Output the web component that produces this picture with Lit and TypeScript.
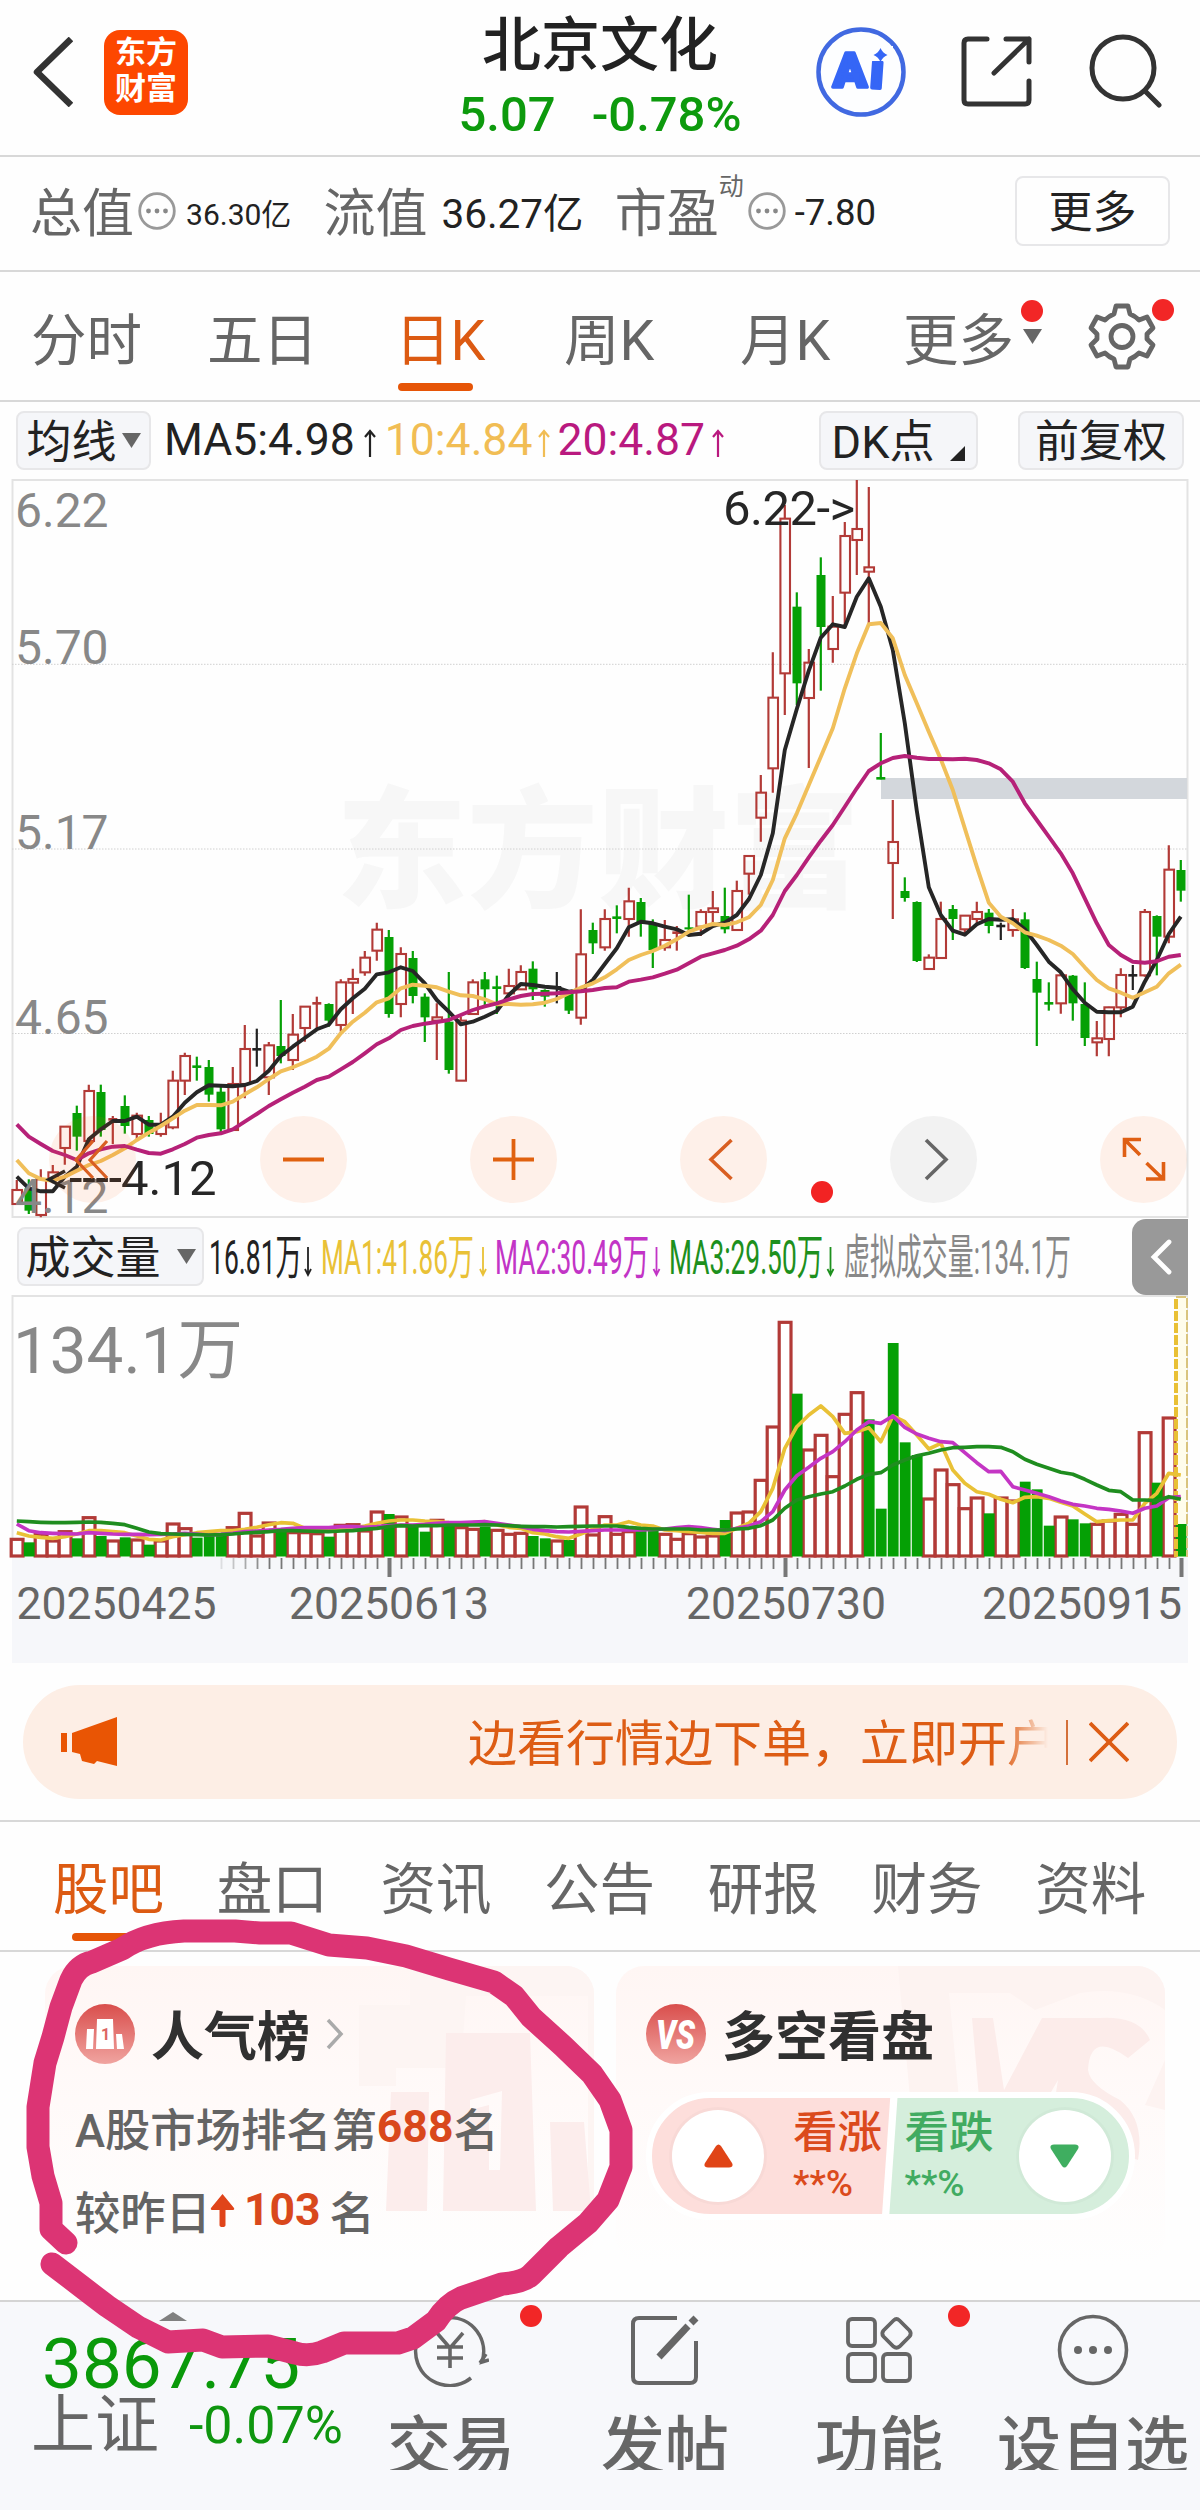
import { LitElement, html, svg, css } from "lit";
import { customElement } from "lit/decorators.js";

type Tone = "R" | "G" | "K";
type Candle = [Tone, number, number, number, number];

const STEP = 12;
const FIRST = 16.8;
const cx = (i: number) => FIRST + STEP * i;
const third = (base: number, values: number[]) => values.map((v) => base + v / 3);
const shift = (base: number, rows: Candle[]): Candle[] =>
  rows.map(([t, a, b, c, d]) => [t, base + a / 3, base + b / 3, base + c / 3, base + d / 3]);
const line = (ys: number[]) => ys.map((y, i) => `${cx(i).toFixed(1)},${y.toFixed(1)}`).join(" ");

/* tone, high, body top, body bottom, low */
const CANDLES: Candle[] = [
  ...shift(860, [
    ["R", 960, 990, 1032, 1032], ["G", 958, 985, 1052, 1062], ["R", 928, 958, 1065, 1072], ["R", 915, 937, 957, 970],
    ["R", 798, 800, 864, 914], ["G", 737, 759, 830, 872], ["R", 674, 693, 843, 860], ["G", 674, 696, 810, 830],
    ["R", 768, 778, 780, 852], ["G", 706, 738, 798, 821], ["R", 758, 767, 822, 840], ["G", 768, 780, 822, 830],
    ["R", 758, 795, 822, 830], ["R", 632, 662, 802, 808], ["R", 578, 588, 662, 705], ["G", 590, 620, 622, 662],
    ["G", 600, 621, 704, 725], ["G", 680, 695, 808, 818], ["R", 621, 672, 810, 810], ["R", 495, 567, 672, 715],
    ["K", 506, 568, 569, 620], ["R", 546, 556, 652, 705], ["G", 420, 558, 588, 610], ["R", 462, 524, 600, 630],
    ["R", 438, 440, 504, 545], ["R", 410, 430, 431, 505], ["G", 430, 432, 482, 500], ["R", 358, 367, 495, 515],
    ["R", 326, 357, 368, 462], ["R", 273, 293, 337, 347], ["R", 188, 209, 272, 302], ["G", 210, 231, 462, 473],
    ["R", 262, 282, 432, 472], ["G", 273, 294, 408, 430], ["G", 400, 410, 472, 546], ["R", 430, 472, 482, 600],
    ["G", 336, 485, 630, 641], ["R", 470, 482, 662, 662], ["R", 358, 367, 462, 462], ["G", 336, 358, 388, 440],
    ["G", 347, 383, 384, 462], ["R", 326, 378, 400, 410], ["R", 316, 336, 388, 390], ["G", 304, 326, 388, 420],
    ["G", 388, 390, 410, 440], ["K", 336, 382, 383, 430], ["G", 390, 398, 452, 462], ["R", 148, 283, 473, 494],
    ["G", 188, 210, 250, 282], ["R", 148, 177, 262, 272], ["G", 136, 173, 174, 220],
  ]),
  ...shift(800, [
    ["R", 263, 304, 357, 410], ["G", 294, 306, 368, 410], ["G", 358, 370, 450, 504], ["R", 360, 420, 442, 452],
    ["R", 378, 398, 399, 452], ["G", 284, 382, 388, 400], ["R", 328, 336, 380, 408], ["R", 273, 325, 336, 375],
    ["G", 263, 348, 388, 400], ["R", 242, 273, 390, 390], ["R", 168, 168, 221, 284],
  ]),
  ...shift(470, [
    ["R", 915, 968, 1043, 1115], ["R", 547, 683, 895, 968], ["R", 105, 146, 610, 735], ["G", 367, 410, 640, 705],
    ["R", 537, 578, 684, 894], ["G", 262, 315, 471, 662], ["R", 378, 470, 537, 578], ["R", 156, 198, 368, 465],
    ["R", 30, 177, 210, 315], ["R", 51, 292, 305, 465], ["G", 789, 925, 926, 928],
  ]),
  ...shift(800, [
    ["R", 0, 126, 189, 357], ["G", 232, 273, 294, 305], ["G", 304, 306, 483, 486], ["R", 463, 473, 507, 507],
    ["R", 305, 357, 474, 474], ["G", 315, 327, 357, 420], ["R", 345, 347, 388, 400], ["R", 305, 336, 357, 370],
    ["G", 327, 338, 378, 400], ["K", 368, 378, 379, 420], ["R", 327, 358, 390, 410], ["G", 337, 358, 504, 507],
    ["G", 485, 537, 578, 738], ["G", 547, 610, 611, 632], ["R", 520, 526, 610, 641], ["G", 525, 527, 610, 662],
    ["G", 547, 612, 714, 738], ["R", 663, 715, 727, 769], ["R", 620, 622, 717, 769], ["R", 505, 525, 622, 652],
    ["K", 495, 526, 527, 570], ["R", 327, 336, 526, 530], ["G", 346, 348, 410, 526], ["R", 136, 209, 410, 430],
    ["G", 180, 210, 272, 305],
  ]),
];

const MA5 = [
  ...third(860, [950, 985, 994, 994, 950, 920, 838, 808, 783, 783, 770, 794, 794, 770, 728, 697, 676, 677, 679, 675, 663, 632, 588, 560, 534, 508, 494, 448, 415, 386, 343, 337, 322, 333, 370, 420, 455, 493, 485, 470, 453, 405, 372, 375, 380, 383, 395, 390, 360, 312]),
  ...third(800, [445, 382, 365, 370, 380, 388, 405, 401, 378, 368, 345, 298, 225, 100]),
  ...third(470, [840, 717, 602, 503, 463, 471, 380, 325, 410, 540, 760, 1022]),
  ...third(800, [262, 345, 392, 404, 373, 357, 359, 358, 388, 435, 485, 517, 568, 608, 635, 637, 637, 620, 545, 480, 402, 350]),
];
const MA10 = [
  ...third(860, [900, 940, 957, 962, 950, 932, 915, 903, 885, 865, 840, 818, 798, 775, 752, 735, 735, 736, 725, 703, 682, 657, 634, 622, 607, 590, 566, 520, 485, 458, 427, 415, 385, 374, 377, 382, 395, 406, 408, 418, 433, 432, 434, 433, 428, 417, 400, 383, 370, 352]),
  ...third(800, [508, 480, 465, 453, 437, 418, 395, 382, 372, 375, 367, 352, 315, 240, 115]),
  ...third(470, [1030, 945, 860, 775, 655, 550, 463, 459, 505, 615, 700, 785, 868, 960, 1075]),
  ...third(800, [200, 308, 350, 370, 397, 407, 420, 437, 462, 502, 540, 565, 578, 593, 577, 560, 520, 494]),
];
const MA20 = [
  ...third(860, [793, 830, 852, 873, 885, 900, 880, 868, 860, 858, 869, 879, 881, 868, 852, 833, 825, 820, 808, 785, 762, 738, 718, 698, 680, 660, 650, 628, 606, 580, 553, 535, 510, 498, 491, 486, 480, 465, 450, 439, 430, 418, 408, 402, 401, 400, 397, 394, 390, 384]),
  ...third(800, [562, 545, 539, 532, 521, 509, 490, 470, 460, 450, 437, 418, 392, 345, 273, 225, 172, 122]),
  ...third(470, [1065, 1010, 955, 903, 880, 864, 858, 863, 867, 867, 868, 866, 870, 880, 898, 935, 1000]),
  ...third(800, [60, 110, 160, 220, 295, 370, 435, 465, 485, 488, 484, 470, 465]),
];

const VOLUMES: [Tone, number][] = (
  "R985 G997 R970 R990 R962 G985 R920 G978 R990 G982 R987 G1004 R990 R939 R953 G983 G975 G975 R950 R907 R975 R936 G958 R965 R965 R968 G980 R943 R941 R960 R903 G912 R918 G950 G965 R928 G945 R950 R955 G950 R958 R970 R967 G978 G985 R990 G990 R888 R972 R917 R970 " +
  "R962 G955 G960 R970 R985 R968 R978 R975 G930 R906 R903 R808 R648 R334 G551 R717 R673 R797 R610 R545 G628 G896 G399 G697 G735 R864 R777 R821 R893 R861 G910 R861 R870 G815 G838 G947 R918 G928 G940 R940 R930 R910 R940 R665 G818 R621 G942"
)
  .split(" ")
  .map((s) => [s[0] as Tone, 1210 + Number(s.slice(1)) / 3]);

const VMA1 = third(1210, [968, 978, 982, 985, 980, 972, 962, 962, 965, 968, 978, 988, 990, 980, 974, 968, 965, 962, 962, 958, 952, 944, 938, 940, 955, 955, 955, 955, 955, 948, 940, 933, 930, 930, 933, 935, 938, 940, 938, 935, 945, 952, 955, 968, 972, 980, 985, 972, 958, 945, 945, 935, 945, 948, 960, 962, 965, 967, 970, 970, 955, 940, 905, 835, 715, 650, 615, 588, 620, 670, 665, 653, 695, 618, 635, 675, 717, 700, 780, 820, 845, 853, 868, 878, 862, 860, 865, 877, 888, 912, 935, 932, 930, 930, 880, 850, 790, 795]);
const VMA2 = third(1210, [942, 962, 968, 970, 971, 972, 968, 970, 972, 973, 973, 974, 973, 972, 970, 972, 975, 973, 970, 965, 963, 960, 958, 955, 953, 953, 953, 950, 950, 952, 950, 947, 945, 945, 943, 940, 938, 938, 936, 935, 940, 945, 950, 958, 962, 965, 966, 964, 962, 960, 960, 960, 960, 958, 957, 953, 950, 953, 958, 962, 955, 948, 935, 905, 840, 797, 772, 745, 725, 695, 660, 635, 640, 618, 652, 672, 685, 695, 698, 728, 758, 785, 784, 830, 840, 850, 860, 873, 883, 888, 895, 898, 903, 910, 895, 888, 863, 860]);
const VMA3 = third(1210, [933, 935, 937, 938, 938, 937, 936, 937, 940, 944, 955, 966, 971, 972, 973, 974, 975, 974, 972, 969, 967, 965, 962, 962, 963, 964, 965, 963, 962, 958, 955, 950, 947, 948, 947, 947, 945, 945, 945, 944, 945, 947, 949, 950, 950, 951, 950, 949, 948, 948, 948, 952, 955, 957, 957, 957, 957, 960, 960, 960, 957, 955, 947, 930, 895, 870, 860, 852, 845, 828, 808, 793, 788, 765, 750, 737, 730, 720, 713, 712, 710, 710, 712, 725, 748, 763, 775, 787, 793, 808, 825, 841, 845, 870, 870, 872, 860, 868]);

const COLOR: Record<Tone, string> = { R: "#b23a37", G: "#05a005", K: "#222" };

@customElement("price-chart")
class PriceChart extends LitElement {
  static styles = css`
    :host { display: block; position: relative; height: 740px; }
    svg { display: block; }
    text { font-family: Roboto, "Noto Sans CJK SC", sans-serif; }
    .tools { position: absolute; left: 49px; top: 638px; display: flex; width: 1138px; }
    .tool { flex: none; width: 87px; height: 87px; border-radius: 50%; background: rgba(250, 95, 20, 0.09); margin-right: 123px; }
    .tool.gray { background: #f2f2f2; }
    .tool:nth-child(1) { margin-right: 124px; }
    .dot { position: absolute; left: 811px; top: 703px; width: 22px; height: 22px; border-radius: 50%; background: #f22323; }
  `;
  private candle([tone, hi, top, bottom, lo]: Candle, i: number) {
    const x = cx(i);
    const c = COLOR[tone];
    const flat = bottom - top < 1.5;
    if (flat)
      return svg`<path d="M${x} ${hi}V${lo}" stroke=${c} stroke-width="2.2" /><path d="M${x - 4.5} ${top}H${x + 4.5}" stroke=${c} stroke-width="2.6" />`;
    return tone === "R"
      ? svg`<path d="M${x} ${hi}V${top}M${x} ${bottom}V${lo}" stroke=${c} stroke-width="2.2" /><rect x=${x - 4.4} y=${top} width="9.6" height=${bottom - top} fill="none" stroke=${c} stroke-width="2.1" />`
      : svg`<path d="M${x} ${hi}V${lo}" stroke=${c} stroke-width="2.2" /><rect x=${x - 4.3} y=${top} width="9" height=${bottom - top} fill=${c} />`;
  }
  render() {
    return html`
      <svg width="1200" height="740" viewBox="0 478 1200 740" fill="none">
        <text x="336" y="897" font-size="131" font-weight="900" fill="#f7f7f7">东方财富</text>
        <rect x="12.5" y="480" width="1175" height="737" stroke="#e3e3e3" stroke-width="2" />
        <path d="M12 664.3H1187M12 849H1187M12 1033.5H1187" stroke="#d0d0d0" stroke-width="1" stroke-dasharray="1.5 1.5" />
        <rect x="881" y="778" width="306" height="21" fill="#d3d7dc" />
        ${CANDLES.map((c, i) => this.candle(c, i))}
        <g stroke-width="3.9" stroke-linejoin="round">
          <polyline points=${line(MA5)} stroke="#262626" />
          <polyline points=${line(MA10)} stroke="#f0bf5a" />
          <polyline points=${line(MA20)} stroke="#b62178" />
        </g>
        <g font-size="48" fill="#888">
          <text x="15" y="527">6.22</text><text x="15" y="664">5.70</text><text x="15" y="849">5.17</text>
          <text x="15" y="1034">4.65</text><text x="15" y="1213">4.12</text>
        </g>
        <g font-size="49" fill="#262626">
          <text x="723" y="525" textLength="132">6.22-&gt;</text>
          <text x="121" y="1195">4.12</text>
        </g>
        <path d="M65 1171L49 1179.500L65 1188" stroke="#262626" stroke-width="3.6" />
        <path d="M70 1180H121" stroke="#262626" stroke-width="3.800" stroke-dasharray="11.500 1.700" />
      </svg>
      <div class="tools">
        <svg class="tool" viewBox="0 0 87 87" fill="none" stroke="#d95f22" stroke-width="3.2"><path d="M44 25L27 44L44 62M58 25L41 44L58 62" /></svg>
        <svg class="tool" viewBox="0 0 87 87" fill="none" stroke="#e0610f" stroke-width="3.8"><path d="M23 43.5H64" /></svg>
        <svg class="tool" viewBox="0 0 87 87" fill="none" stroke="#e0610f" stroke-width="3.8"><path d="M23 43.5H64M43.5 23V64" /></svg>
        <svg class="tool" viewBox="0 0 87 87" fill="none" stroke="#d95f22" stroke-width="3.6"><path d="M51.5 24L31 43.5L51.5 63" /></svg>
        <svg class="tool gray" viewBox="0 0 87 87" fill="none" stroke="#666" stroke-width="3.6"><path d="M36 24L56 43.5L36 63" /></svg>
        <svg class="tool" viewBox="0 0 87 87" fill="none" stroke="#df5f14" stroke-width="3.600"><path d="M41 23.500H24.500V41M24.500 23.500L40 39M46.500 47L63 63M63.500 46V63H46" /></svg>
      </div>
      <span class="dot"></span>
    `;
  }
}

@customElement("volume-chart")
class VolumeChart extends LitElement {
  static styles = css`
    :host { display: block; height: 368px; }
    svg { display: block; }
    text { font-family: Roboto, "Noto Sans CJK SC", sans-serif; }
  `;
  render() {
    const ticks = VOLUMES.map((_, i) => i).filter((i) => i >= 17);
    return html`
      <svg width="1200" height="368" viewBox="0 1295 1200 368" fill="none">
        <path d="M12.500 1557V1296H1187V1557" stroke="#e3e3e3" stroke-width="2" />
        <rect x="12" y="1557" width="1176" height="106" fill="#f6f7fa" />
        <rect x="1176" y="1297" width="11" height="260" fill="#fffdec" />
        ${VOLUMES.map(([t, top], i) => t === "R"
          ? svg`<rect x=${cx(i) - 5.6} y=${top + 1} width="11.8" height=${1555 - top} fill="#fff" stroke="#b23a37" stroke-width="3.2" />`
          : "")}
        ${VOLUMES.map(([t, top], i) => t === "G"
          ? svg`<rect x=${cx(i) - 5} y=${top} width="10.8" height=${1556.5 - top} fill="#05a005" />`
          : "")}
        <path d="M1176 1299V1557" stroke="#e9c034" stroke-width="4" stroke-dasharray="10 2" />
        <path d="M1176 1297H1187V1557" stroke="#d9c47e" stroke-width="2" stroke-dasharray="10 2" />
        <g stroke-width="3.7" stroke-linejoin="round">
          <polyline points=${line(VMA1)} stroke="#e9c136" />
          <polyline points=${line(VMA2)} stroke="#c435c4" />
          <polyline points=${line(VMA3)} stroke="#1f8d1f" />
        </g>
        ${ticks.map((i) => {
          const major = i === 31 || i === 64 || i === 97;
          return svg`<path d="M${cx(i) + 0.7} 1558V${major ? 1577 : 1569}" stroke="#777" stroke-width=${major ? 4 : 1.8} opacity=${Math.min(1, (i - 16) / 5)} />`;
        })}
        <text x="13" y="1373" font-size="65.500" fill="#888">134.1万</text>
        <g font-size="44.500" fill="#666">
          <text x="16.500" y="1619">20250425</text><text x="289" y="1619">20250613</text>
          <text x="686" y="1619">20250730</text><text x="982" y="1619">20250915</text>
        </g>
      </svg>
    `;
  }
}

@customElement("app-root")
class AppRoot extends LitElement {
  static styles = css`
    :host { display: block; position: relative; width: 1200px; height: 2510px; overflow: hidden; background: #fefefe; color: #222;
      font-family: Roboto, "Noto Sans CJK SC", sans-serif; white-space: nowrap; }
    * { box-sizing: border-box; }
    svg { display: block; flex: none; }
    svg text { font-family: Roboto, "Noto Sans CJK SC", sans-serif; }
    .row { display: flex; align-items: center; }
    .row > * { flex: none; }
    header { display: grid; grid-template-columns: 1fr 300px 1fr; height: 157px; border-bottom: 2px solid #d8d8d8; }
    .left { display: flex; align-items: center; padding: 0 0 11px 32px; gap: 31px; }
    .logo { width: 84px; height: 85px; border-radius: 16px; background: #fd4700; color: #fff; font-weight: 700; font-size: 31px; line-height: 36px; text-align: center; padding-top: 5px; }
    .mid { display: flex; flex-direction: column; align-items: center; padding-top: 10px; }
    .name { font-size: 59px; font-weight: 500; line-height: 72px; }
    .quote { display: flex; gap: 36px; font-size: 49px; font-weight: 500; line-height: 66px; color: #0d9a0d; }
    .right { display: flex; align-items: center; padding: 0 0 12px 65px; gap: 53px; }
    .facts { height: 115px; padding: 0 0 8px 30px; border-bottom: 2px solid #d8d8d8; color: #666; font-size: 52px; }
    .facts b { font-weight: 400; color: #222; }
    .facts svg { margin-left: 4px; margin-top: 2px; }
    .v1 { font-size: 30px; margin: 4px 32px 0 10px; }
    .v2 { font-size: 40.500px; margin: 2px 31px 0 14px; }
    .v3 { font-size: 36.500px; margin: 5px 0 0 9px; }
    .dyn { font-size: 25px; align-self: flex-start; margin-top: 9px; }
    .box { border: 2px solid #e7e7e9; border-radius: 8px; color: #222; display: flex; align-items: center; justify-content: center; padding-bottom: 4px; }
    .box svg { margin-top: 4px; }
    .more { width: 155px; height: 70px; font-size: 44px; margin: 0 30px -3px auto; }
    .periods { height: 130px; border-bottom: 2px solid #d8d8d8; color: #666; font-size: 55.500px; padding-left: 31px; position: relative; }
    .periods > span { height: 128px; display: flex; align-items: center; padding-bottom: 1px; }
    .on { color: #dc5a12; position: relative; }
    .on::after { content: ""; position: absolute; left: 50%; margin-left: -37px; width: 75px; height: 8px; border-radius: 4px; background: #e65507; }
    .periods .on::after { top: 111px; left: 3px; margin-left: 0; }
    .badge { position: absolute; width: 22px; height: 22px; border-radius: 50%; background: #f22626; }
    .mas { height: 76px; padding: 0 16px; font-size: 44.500px; }
    .mas .box, .vols .box { background: #f5f6f9; height: 59px; font-size: 45px; }
    .vols { height: 77px; padding-left: 17px; position: relative; }
    .vols text { font-size: 48px; }
    .fold { width: 56px; height: 76px; border-radius: 14px 0 0 14px; background: #999; margin-left: 60px; display: flex; align-items: center; padding-left: 18px; }
    .banner { margin: 22px 23px 21px; height: 114px; border-radius: 57px; background: #fdeee5; color: #dd5c14; padding-left: 37px; }
    .slogan { margin-left: 350px; width: 580px; overflow: hidden; font-size: 49px; padding-bottom: 5px; -webkit-mask-image: linear-gradient(90deg, #000 92%, transparent 100%); }
    .slash { width: 2px; height: 45px; background: #d4703a; margin: 0 21px 0 18px; }
    .topics { height: 132px; border-top: 2px solid #d8d8d8; border-bottom: 2px solid #d8d8d8; color: #666; font-size: 55.500px; padding-left: 53px; gap: 52.700px; }
    .topics > span { height: 128px; display: flex; align-items: center; padding-bottom: 2px; }
    .topics .on::after { top: 111px; }
    .cards { display: flex; gap: 22px; padding: 14px 0 0 45px; height: 348px; }
    .card { width: 549px; height: 299px; border-radius: 28px; background: linear-gradient(#fff6f4, #fffaf9 45%, #fefefe); padding: 38px 0 0 30px; position: relative; overflow: hidden; }
    .deco { position: absolute; left: 0; top: 0; }
    .card > :not(.deco) { position: relative; }
    .head { height: 60px; font-size: 53px; font-weight: 700; color: #303030; gap: 16px; }
    .head span { padding-bottom: 2px; }
    .text { color: #646464; font-weight: 500; font-size: 45.300px; height: 84px; }
    .head + .text { height: 82px; margin-top: 22px; }
    .text b { color: #d9481c; font-size: 44.500px; font-weight: 700; }
    .duel { display: grid; grid-template-columns: 1fr 1fr; width: 489px; height: 128px; border-radius: 64px; border: 6px solid #fff; margin: 28px 0 0 0; font-weight: 500; overflow: hidden; background: linear-gradient(94deg, #fddedb 49%, #fff 49.200%, #fff 50.500%, #d5eedc 50.700%); }
    .side { display: flex; align-items: center; color: #db4a1c; }
    .down { color: #41ab61; padding-left: 14px; }
    .disc { width: 92px; height: 92px; border-radius: 50%; background: #fff; box-shadow: 0 0 0 3px rgba(0, 0, 0, 0.02); display: flex; align-items: center; justify-content: center; margin: 0 29px 0 20px; flex: none; }
    .down .disc { margin: 0 0 0 25px; }
    .say { font-size: 44.500px; line-height: 56px; }
    .say small { display: block; font-size: 37px; line-height: 46px; }
    footer { display: flex; height: 210px; background: #f7f8fb; border-top: 2px solid #d4d4d4; color: #666; }
    .index { width: 344px; padding: 10px 0 0 33px; }
    .peak { width: 0; height: 0; margin-left: 126px; border: 14px solid transparent; border-top: 0; border-bottom: 9px solid #808080; }
    .points { font-size: 71px; line-height: 78px; color: #0a990a; padding-left: 9px; margin-top: 4px; }
    .market { display: flex; align-items: center; font-size: 64px; line-height: 66px; margin: -10px 0 0 -2px; }
    .market b { font-weight: 400; font-size: 52px; color: #0f960f; margin-left: 30px; }
    .actions { display: grid; grid-template-columns: repeat(4, 214px); }
    .action { position: relative; height: 168px; overflow: hidden; padding-top: 11px; font-size: 64px; line-height: 76px; font-weight: 500; display: flex; flex-direction: column; align-items: center; }
    .action svg { width: 76px; height: 74px; margin-bottom: 23px; }
    .action .badge { left: 176px; top: 3px; }
    .ink { position: absolute; left: 0; top: 0; pointer-events: none; }
  `;

  private info() {
    return html`<svg width="38" height="38" viewBox="0 0 38 38"><circle cx="19" cy="19" r="17.300" fill="none" stroke="#999" stroke-width="2.800" /><g fill="#888"><circle cx="10.500" cy="19" r="2.400" /><circle cx="19" cy="19" r="2.400" /><circle cx="27.500" cy="19" r="2.400" /></g></svg>`;
  }
  private up(color: string, margin: string) {
    return html`<svg style="margin:${margin}" width="14" height="46" viewBox="0 0 14 46" fill="none" stroke=${color} stroke-width="2.200"><path d="M7 40V14M2 20L7 14L12 20" /></svg>`;
  }
  private caret() {
    return html`<svg width="19" height="15" viewBox="0 0 19 15"><path d="M0 0H19L9.500 15Z" fill="#666" /></svg>`;
  }

  render() {
    return html`
      <header>
        <div class="left">
          <svg width="41" height="70" viewBox="0 0 41 70" fill="none" stroke="#333" stroke-width="6.500" stroke-linejoin="round"><path d="M39 2L5 35L39 68" /></svg>
          <div class="logo">东方<br />财富</div>
        </div>
        <div class="mid">
          <div class="name">北京文化</div>
          <div class="quote"><span>5.07</span><span>-0.78%</span></div>
        </div>
        <div class="right">
          <svg width="92" height="92" viewBox="0 0 92 92"><circle cx="46" cy="46" r="42.500" fill="#fdfeff" stroke="#4169e1" stroke-width="4.500" />
            <g fill="#3566f6" stroke="#3566f6" stroke-width="3.500" stroke-linejoin="round" font-size="49" font-weight="900"><text x="18" y="61" textLength="34" lengthAdjust="spacingAndGlyphs">A</text><text x="55" y="62" transform="rotate(4 62 50)">i</text></g>
            <path d="M54 20H78V35H54Z" fill="#fdfeff" />
            <path d="M65.500 22Q67.500 27 72.500 29Q67.500 31 65.500 36Q63.500 31 58.500 29Q63.500 27 65.500 22Z" fill="#3566f6" /></svg>
          <svg width="73" height="73" viewBox="0 0 73 73" fill="none" stroke="#333" stroke-width="5" stroke-linecap="round" stroke-linejoin="round"><path d="M27 4H8Q4 4 4 8V65Q4 69 8 69H65Q69 69 69 65V46M46 4H69V27M69 4L34 38" /></svg>
          <svg width="76" height="76" viewBox="0 0 76 76" fill="none" stroke="#333" stroke-width="5" stroke-linecap="round"><circle cx="37" cy="34" r="31" /><path d="M59 57L73 71" /></svg>
        </div>
      </header>

      <section class="facts row">
        <span>总值</span>${this.info()}<b class="v1">36.30亿</b>
        <span>流值</span><b class="v2">36.27亿</b>
        <span>市盈</span><span class="dyn">动</span>${this.info()}<b class="v3">-7.80</b>
        <div class="box more">更多</div>
      </section>

      <nav class="periods row">
        <span style="width:175px">分时</span><span style="width:189px;padding-left:1px">五日</span><span class="on" style="width:169px">日K</span>
        <span style="width:176px">周K</span><span style="width:163px">月K</span><span>更多</span>
        <svg style="margin:0 44px 0 9px" width="19" height="15" viewBox="0 0 19 15"><path d="M0 0H19L9.500 15Z" fill="#666" /></svg>
        <svg width="72" height="72" viewBox="0 0 72 72" fill="none" stroke="#666" stroke-width="4.800" stroke-linejoin="round">
          <path d="M30 6H42L44 14Q49 16 53 20L61 17L67 28L61 34V39L67 45L61 56L53 53Q49 57 44 59L42 67H30L28 59Q23 57 19 53L11 56L5 45L11 39V34L5 28L11 17L19 20Q23 16 28 14Z" /><circle cx="36" cy="36.500" r="11" /></svg>
        <i class="badge" style="left:1021px;top:28px"></i><i class="badge" style="left:1152px;top:27px"></i>
      </nav>

      <section class="mas row">
        <div class="box" style="width:135px;gap:5px">均线${this.caret()}</div>
        <span style="margin-left:13px">MA5:4.98</span>${this.up("#222", "0 8px 0 8px")}
        <span style="color:#f1bd54">10:4.84</span>${this.up("#f1bd54", "0 6px 0 5px")}
        <span style="color:#b9197f">20:4.87</span>${this.up("#b9197f", "0 0 0 6px")}
        <div class="box" style="width:159px;margin:0 40px 0 auto;gap:16px">DK点<svg width="15" height="15" viewBox="0 0 15 15" style="margin-top:30px"><path d="M15 0V15H0Z" fill="#222" /></svg></div>
        <div class="box" style="width:166px;font-size:44px">前复权</div>
      </section>

      <price-chart></price-chart>

      <section class="vols row">
        <div class="box" style="width:187px;gap:16px">成交量${this.caret()}</div>
        <svg width="868" height="76" viewBox="204 1218 868 76">
          <text x="209" y="1273" textLength="93" lengthAdjust="spacingAndGlyphs" fill="#222">16.81万</text>
          <text x="321" y="1273" textLength="153" lengthAdjust="spacingAndGlyphs" fill="#e9c136">MA1:41.86万</text>
          <text x="495" y="1273" textLength="154" lengthAdjust="spacingAndGlyphs" fill="#c234c6">MA2:30.49万</text>
          <text x="669" y="1273" textLength="154" lengthAdjust="spacingAndGlyphs" fill="#1d901d">MA3:29.50万</text>
          <text x="844" y="1273" textLength="227" lengthAdjust="spacingAndGlyphs" fill="#888">虚拟成交量:134.1万</text>
          <g fill="none" stroke-width="1.800"><path d="M308 1246V1274M305 1268L308 1274L311 1268" stroke="#222" /><path d="M483 1246V1274M480 1268L483 1274L486 1268" stroke="#e9c136" /><path d="M656.500 1246V1274M653.500 1268L656.500 1274L659.500 1268" stroke="#c234c6" /><path d="M830.500 1246V1274M827.500 1268L830.500 1274L833.500 1268" stroke="#1d901d" /></g>
        </svg>
        <div class="fold"><svg width="22" height="38" viewBox="0 0 22 38" fill="none" stroke="#fff" stroke-width="4.800" stroke-linecap="round"><path d="M19 4L4 19L19 34" /></svg></div>
      </section>

      <volume-chart></volume-chart>

      <section class="banner row">
        <svg width="58" height="52" viewBox="0 0 58 52" fill="#e95504"><path d="M1 17H7V36H1ZM12 17L57 1V50L37 45L34 48L22 45L20 38L12 36Z" /></svg>
        <div class="slogan">边看行情边下单，立即开户</div>
        <i class="slash"></i>
        <svg width="40" height="42" viewBox="0 0 40 42" fill="none" stroke="#dd5c14" stroke-width="3.800"><path d="M1 2L39 40M39 2L1 40" /></svg>
      </section>

      <nav class="topics row">
        <span class="on">股吧</span><span>盘口</span><span>资讯</span><span>公告</span><span>研报</span><span>财务</span><span>资料</span>
      </nav>

      <section class="cards">
        <article class="card">
          <svg class="deco" width="549" height="299" viewBox="45 1966 549 299">
            <path d="M410 1966H594V2211H588V1996H466L461 2068H396V2086H359V2005H410Z" fill="#fdf5f3" />
            <g fill="#fcedec"><path d="M391 2092H429L427 2211H386Z" /><path fill-rule="evenodd" d="M446 2033H530L536 2211H443ZM502 2091L470 2100V2110L489 2105V2170H500Z" /><path d="M550 2122H584L591 2211H553Z" /></g>
          </svg>
          <div class="head row">
            <svg width="60" height="60" viewBox="0 0 60 60"><defs><linearGradient id="g1" x2="0" y2="1"><stop stop-color="#d94e4c" /><stop offset="1" stop-color="#f0a4a0" /></linearGradient></defs><circle cx="30" cy="30" r="30" fill="url(#g1)" /><g fill="#fff"><path d="M12 25H19L18 45H11ZM41 30H47L49 45H42ZM22 15H38L39 45H21Z" /></g><text x="26" y="36" font-size="16" font-weight="700" fill="#dc6563">1</text></svg>
            <span>人气榜</span>
            <svg width="18" height="32" viewBox="0 0 18 32" fill="none" stroke="#aaa" stroke-width="3.500"><path d="M2 2L15 16L2 30" /></svg>
          </div>
          <div class="text row">A股市场排名第<b>688</b>名</div>
          <div class="text row">较昨日<svg style="margin:2px 9px 0 -1px" width="25" height="34" viewBox="0 0 25 34"><path d="M12.500 0L24 14Q25 16 22 16H15.500V31Q15.500 33 12.500 33Q9.500 33 9.500 31V16H3Q0 16 1 14Z" fill="#e0441a" /></svg><b style="margin-right:9px">103</b>名</div>
        </article>
        <article class="card">
          <svg class="deco" width="549" height="299" viewBox="616 1966 549 299">
            <path d="M898 1966H1165V2110L1145 2105L1165 2060V2010Q1130 1985 1080 1993L1035 2010L1010 1993H949L961 2120H912Z" fill="#fdf3f1" />
            <path d="M972 2018H993L1004 2090L1042 2018H1100Q1140 2016 1150 2040L1128 2058Q1090 2030 1088 2070Q1090 2085 1120 2100Q1145 2120 1138 2160L1050 2130L1058 2080L1035 2120H981Z" fill="#fcecea" />
          </svg>
          <div class="head row">
            <svg width="60" height="60" viewBox="0 0 60 60"><defs><linearGradient id="g2" x2="0" y2="1"><stop stop-color="#d94e4c" /><stop offset="1" stop-color="#f0a4a0" /></linearGradient></defs><circle cx="30" cy="30" r="30" fill="url(#g2)" /><text x="10" y="44.500" font-size="41" font-weight="900" font-style="italic" fill="#fff" textLength="39" lengthAdjust="spacingAndGlyphs">VS</text></svg>
            <span>多空看盘</span>
          </div>
          <div class="duel">
            <div class="side"><div class="disc"><svg width="29" height="24" viewBox="0 0 29 24"><path d="M12 2Q14.500 -1 17 2L28 19Q30 23 25 23.500H4Q-1 23 1 19Z" fill="#e04416" /></svg></div><div class="say">看涨<small>**%</small></div></div>
            <div class="side down"><div class="say">看跌<small>**%</small></div><div class="disc"><svg width="29" height="24" viewBox="0 0 29 24"><path d="M12 22Q14.500 25 17 22L28 5Q30 1 25 .5H4Q-1 1 1 5Z" fill="#3fae60" /></svg></div></div>
          </div>
        </article>
      </section>

      <footer>
        <div class="index">
          <div class="peak"></div>
          <div class="points">3867.75</div>
          <div class="market">上证<b>-0.07%</b></div>
        </div>
        <div class="actions">
          <div class="action"><svg viewBox="0 0 76 74" fill="none" stroke="#666" stroke-width="3.600"><path d="M58 65A34 34 0 1 1 69 49L76 47M67 50L73 41M24 20L37 35L50 20M37 35V55M24 34H50M24 45H50" /></svg>交易<i class="badge"></i></div>
          <div class="action"><svg viewBox="0 0 76 74" fill="none" stroke="#666" stroke-width="4"><path d="M50 5H12Q6 5 6 11V64Q6 70 12 70H63Q69 70 69 64V28" /><path d="M32 44L61 13" stroke-width="7" /><path d="M64 10L69 5" stroke-width="7" /></svg>发帖</div>
          <div class="action"><svg viewBox="0 0 76 74" fill="none" stroke="#666" stroke-width="3.800"><rect x="7" y="6" width="27" height="27" rx="4" /><rect x="7" y="41" width="27" height="27" rx="4" /><rect x="42" y="41" width="27" height="27" rx="4" /><path d="M52.500 7.500Q55.500 4.500 58.500 7.500L68.500 17.500Q71 20.500 68.500 23.500L58.500 33.500Q55.500 36 52.500 33.500L42.500 23.500Q40 20.500 42.500 17.500Z" /></svg>功能<i class="badge"></i></div>
          <div class="action"><svg viewBox="0 0 76 74"><circle cx="38" cy="37" r="33.500" fill="none" stroke="#666" stroke-width="3.600" /><g fill="#666"><circle cx="23" cy="37" r="4" /><circle cx="38" cy="37" r="4" /><circle cx="53" cy="37" r="4" /></g></svg>设自选</div>
        </div>
      </footer>

      <svg class="ink" width="1200" height="2510" viewBox="0 0 1200 2510" fill="none" stroke="#dc3474" stroke-width="23" stroke-linecap="round" stroke-linejoin="round">
        <path d="M66 2243L51 2229V2203L43 2176L38 2147V2107L45 2063L53 2037L61 2007L71 1980Q78 1965 92 1962L122 1949Q145 1933 184 1931H235L260 1933H291L329 1945L367 1948L406 1956L449 1969L494 1982L514 1996L531 2017L563 2046L592 2074L610 2100L621 2130V2167L608 2200L588 2223L559 2247L531 2275Q524 2282 502 2284L461 2298Q447 2304 436 2321L413 2338L398 2343H344L322 2352Q308 2357 295 2353L268 2346L222 2347L203 2340L168 2342L138 2327L107 2306L86 2290L52 2264" />
      </svg>
    `;
  }
}
